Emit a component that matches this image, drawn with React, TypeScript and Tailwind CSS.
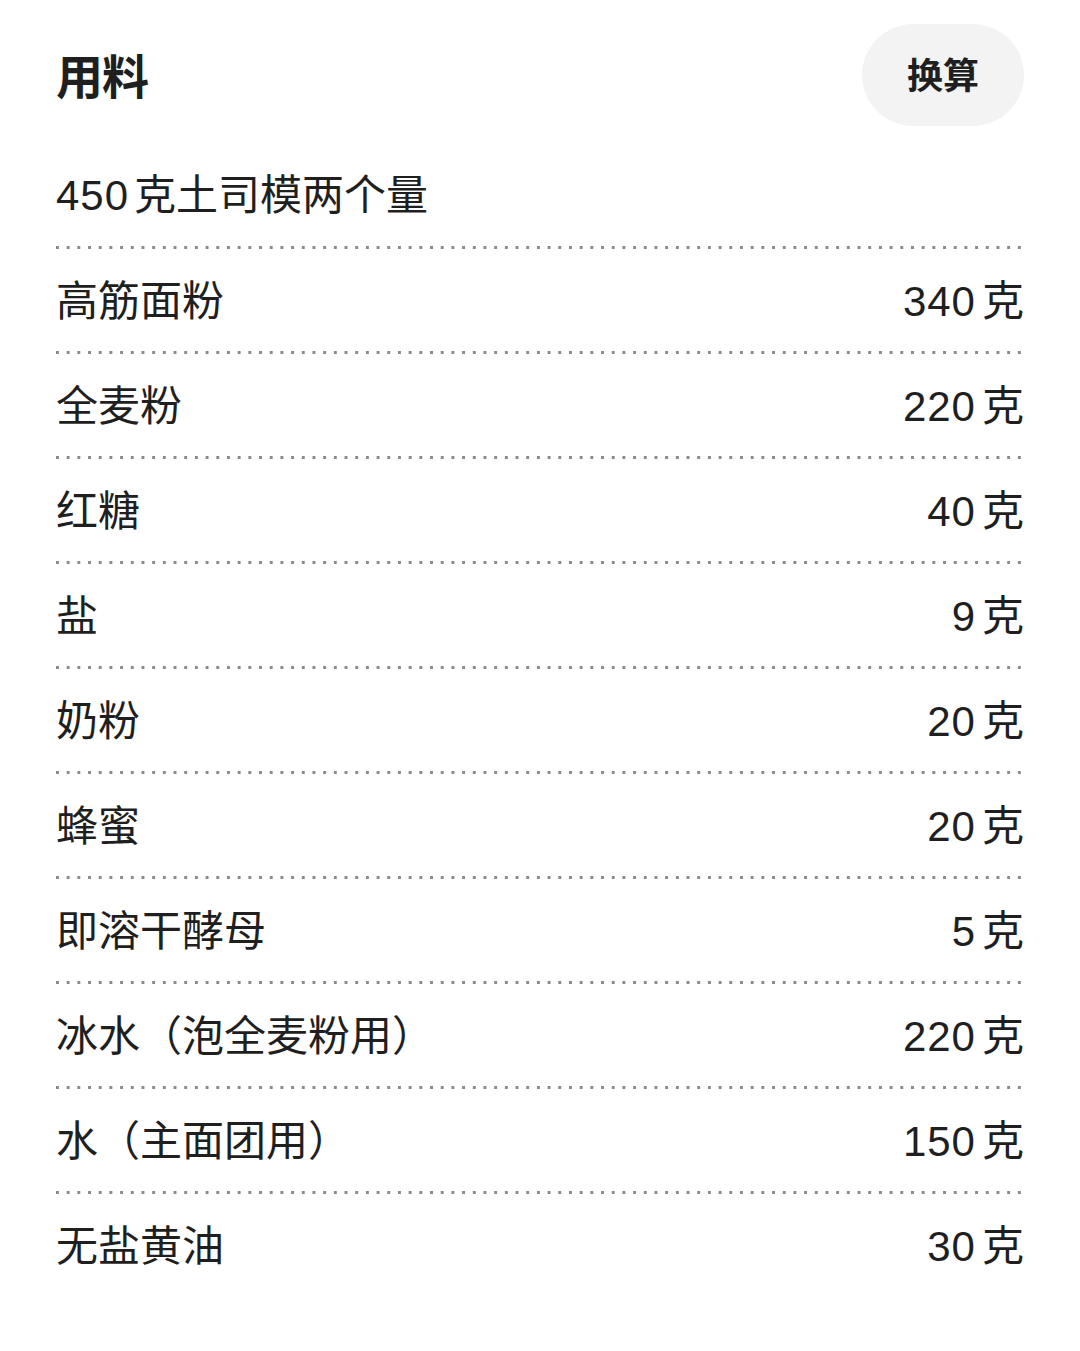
import React from "react";

const rows: [string, string][] = [
  ["高筋面粉", "340"],
  ["全麦粉", "220"],
  ["红糖", "40"],
  ["盐", "9"],
  ["奶粉", "20"],
  ["蜂蜜", "20"],
  ["即溶干酵母", "5"],
  ["冰水（泡全麦粉用）", "220"],
  ["水（主面团用）", "150"],
  ["无盐黄油", "30"],
];

const font = { fontFamily: '"Liberation Sans", "Noto Sans CJK SC", sans-serif' };

function Dots() {
  return (
    <div className="h-[3px] w-full bg-[linear-gradient(to_right,#8a8a8a_3px,transparent_3px)] bg-[length:10.7px_3px] bg-repeat-x" />
  );
}

export default function App() {
  return (
    <div className="w-[1080px] h-[1351px] bg-white text-[#1f1f1f] px-[56px] pt-[24px]" style={font}>
      <div className="flex items-center justify-between">
        <h1 className="text-[47px] font-bold leading-none tracking-[-1px] pt-[4px]">用料</h1>
        <button className="w-[162px] h-[102px] rounded-full bg-[#f3f3f3] text-[36px] font-bold text-[#1f1f1f] flex items-center justify-center pt-[4px]">
          换算
        </button>
      </div>
      <div className="h-[120px] flex items-end pb-[29px] text-[42px] leading-none">
        <span>
          <span className="tracking-[1px]">450</span>
          <span className="ml-[5px]">克土司模两个量</span>
        </span>
      </div>
      <Dots />
      {rows.map(([name, amt], i) => (
        <div key={i}>
          <div className="h-[102px] flex items-center justify-between text-[42px] leading-none pt-[4px]">
            <span>{name}</span>
            <span>
              <span className="tracking-[1px]">{amt}</span>
              <span className="ml-[6px]">克</span>
            </span>
          </div>
          {i < rows.length - 1 && <Dots />}
        </div>
      ))}
    </div>
  );
}
